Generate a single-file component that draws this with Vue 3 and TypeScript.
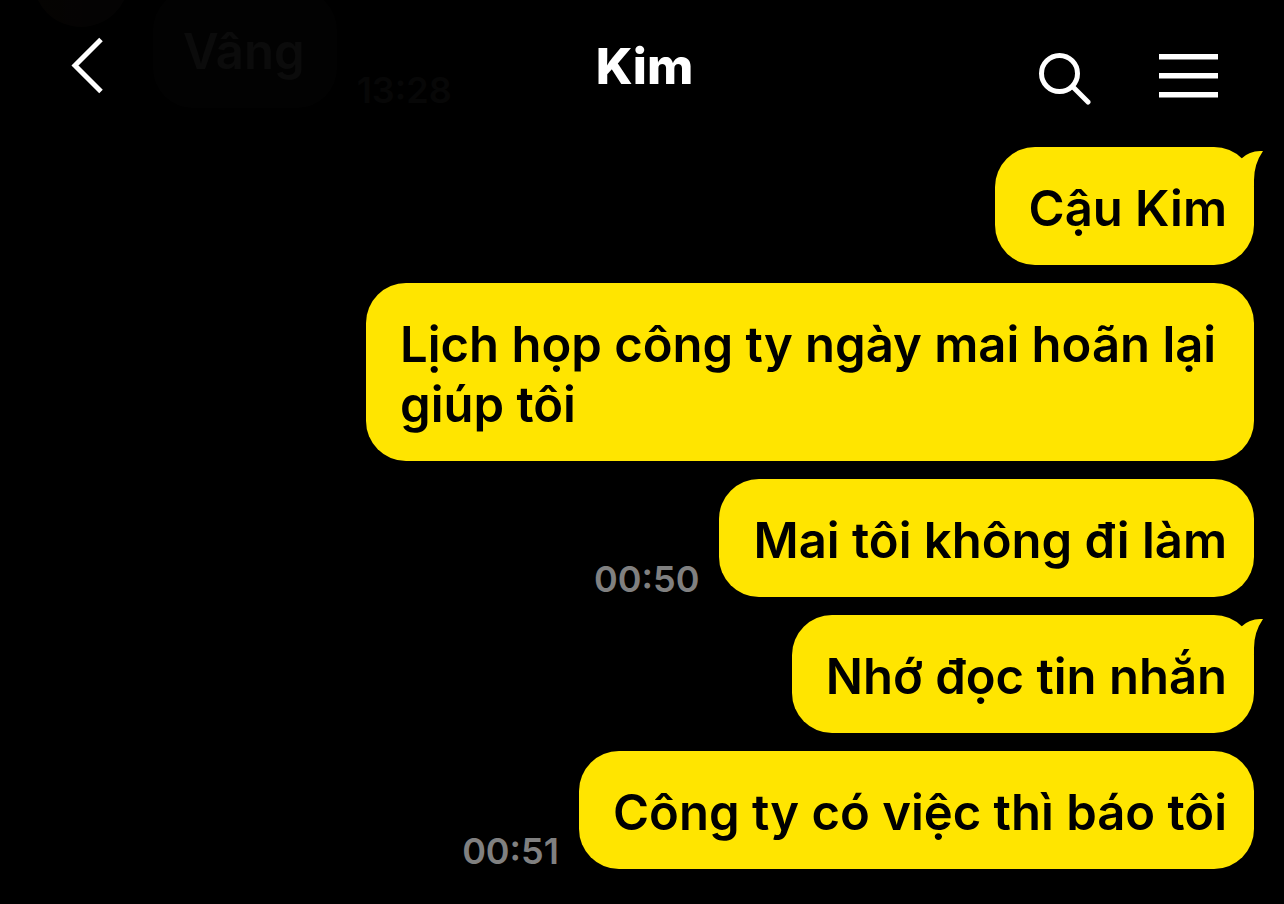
<script setup lang="ts">
interface Message {
  id: number
  text: string
  time?: string
  tail?: boolean
}

const contact = 'Kim'

const received: Message = { id: 0, text: 'Vâng', time: '13:28' }

const sent: Message[] = [
  { id: 1, text: 'Cậu Kim', tail: true },
  { id: 2, text: 'Lịch họp công ty ngày mai hoãn lại giúp tôi' },
  { id: 3, text: 'Mai tôi không đi làm', time: '00:50' },
  { id: 4, text: 'Nhớ đọc tin nhắn', tail: true },
  { id: 5, text: 'Công ty có việc thì báo tôi', time: '00:51' },
]
</script>

<template>
  <main class="chat">
    <header class="bar">
      <button class="icon-button" type="button" aria-label="Back">
        <svg width="34" height="58" viewBox="0 0 34 58" fill="none" stroke="#fff" stroke-width="5">
          <path d="M31 2.500 5 28.500 31 54.500" />
        </svg>
      </button>
      <h1 class="title">{{ contact }}</h1>
      <div class="actions">
        <button class="icon-button" type="button" aria-label="Search">
          <svg width="54" height="54" viewBox="0 0 54 54" fill="none" stroke="#fff" stroke-width="5">
            <circle cx="21.500" cy="22.500" r="18" />
            <path d="M35 36 50 51" stroke-linecap="round" />
          </svg>
        </button>
        <button class="icon-button" type="button" aria-label="Menu">
          <svg width="60" height="48" viewBox="0 0 60 48" fill="#fff">
            <path d="M0 0h59v5.500H0zM0 19h59v5.500H0zM0 38h59v5.500H0z" />
          </svg>
        </button>
      </div>
    </header>

    <ol class="messages">
      <li class="row incoming">
        <span class="avatar" aria-hidden="true"></span>
        <p class="bubble">{{ received.text }}</p>
        <time class="time">{{ received.time }}</time>
      </li>
      <li v-for="message in sent" :key="message.id" class="row outgoing">
        <time v-if="message.time" class="time">{{ message.time }}</time>
        <p class="bubble">
          {{ message.text }}
          <svg v-if="message.tail" class="tail" width="34" height="40" viewBox="0 0 34 40" aria-hidden="true">
            <path d="M11.500 11.500Q20 3 33 4Q24 17 24 33V40L8 24Z" fill="#ffe500" />
          </svg>
        </p>
      </li>
    </ol>
  </main>
</template>

<style>
body {
  margin: 0;
  background: #000;
}
</style>

<style scoped>
.chat {
  position: relative;
  min-height: 100vh;
  box-sizing: border-box;
  overflow: hidden;
  background: #000;
  color: #000;
  font-family: Inter, "Noto Sans", sans-serif;
}

.bar {
  position: absolute;
  z-index: 1;
  top: 0;
  left: 0;
  right: 0;
  display: grid;
  grid-template-columns: 1fr auto 1fr;
  align-items: center;
  height: 132px;
  box-sizing: border-box;
  padding: 0 65px 0 70px;
  background: rgba(0, 0, 0, 0.95);
}

.title {
  margin: 0;
  color: #fff;
  font-size: 50px;
  line-height: 60px;
  font-weight: 800;
}

.icon-button {
  display: block;
  padding: 0;
  border: 0;
  background: none;
  cursor: pointer;
}

.icon-button svg {
  display: block;
}

.actions {
  display: flex;
  justify-content: flex-end;
  align-items: center;
  gap: 67px;
  padding-top: 24px;
}

.messages {
  display: flex;
  flex-direction: column;
  gap: 18px;
  margin: -69px 0 0;
  padding: 0 30px 34px;
  list-style: none;
}

.row {
  display: flex;
  align-items: flex-end;
  gap: 20px;
}

.incoming {
  height: 177px;
  margin-bottom: 21px;
}

.outgoing {
  justify-content: flex-end;
}

.avatar {
  align-self: flex-start;
  flex: none;
  width: 96px;
  height: 96px;
  margin: 0 4px 0 3px;
  border-radius: 50%;
  background: linear-gradient(90deg, #6b4a30, #4c4844);
}

.bubble {
  position: relative;
  box-sizing: border-box;
  max-width: 888px;
  margin: 0;
  padding: 32px 27px 27px 34px;
  border-radius: 40px;
  background: #ffe500;
  font-size: 49px;
  line-height: 59px;
  font-weight: 600;
}

.outgoing .bubble {
  padding-bottom: 26px;
  line-height: 60px;
}

.incoming .bubble {
  padding: 32px 32px 27px 30px;
  background: #2d2d2d;
  color: #d0d0d0;
}

.tail {
  position: absolute;
  top: 0;
  right: -10px;
}

.time {
  color: #808080;
  font-size: 36px;
  line-height: 36px;
  font-weight: 600;
}
</style>
